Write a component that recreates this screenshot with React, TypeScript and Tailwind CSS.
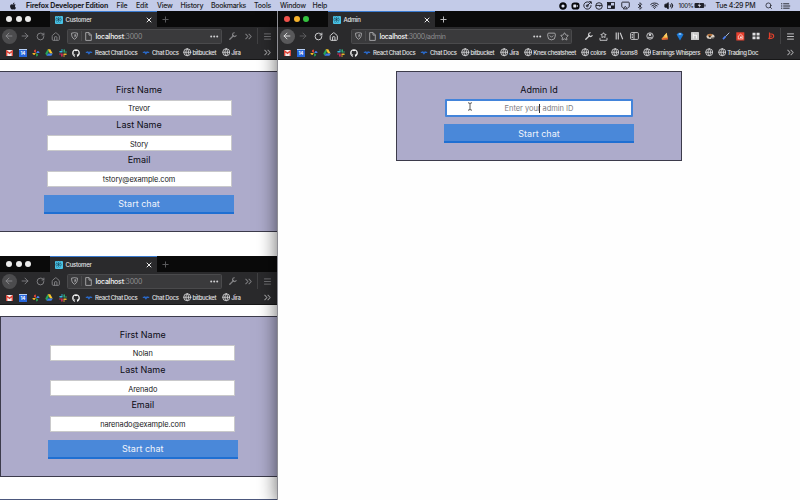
import React from "react";
import {
  ArrowLeft, ArrowRight, RotateCw, House, ChevronsRight, Menu, X, Plus,
  Globe, Star, Bluetooth, Wifi, Volume2, Search, Airplay, Pocket,
} from "lucide-react";
import { FaApple, FaGithub, FaReact } from "react-icons/fa";

const Cell = ({ c, children }: { c: string; children?: React.ReactNode }) => (
  <div className={"flex h-full shrink-0 items-center justify-center " + c}>{children}</div>
);

function MenuBar() {
  return (
    <div className="relative z-20 flex h-[11px] shrink-0 items-center bg-[#c3cbe8] text-[7px] font-medium leading-[10px] text-[#1c1d26]">
      <Cell c="w-[26px]"><FaApple size={8} /></Cell>
      <div className="w-[90.5px] font-bold tracking-[-0.14px]">Firefox Developer Edition</div>
      <div className="w-[19.5px] tracking-[-0.2px]">File</div>
      <div className="w-[21px] tracking-[-0.2px]">Edit</div>
      <div className="w-[23.5px] tracking-[-0.2px]">View</div>
      <div className="w-[30.5px] tracking-[-0.2px]">History</div>
      <div className="w-[43px] tracking-[-0.3px]">Bookmarks</div>
      <div className="w-[26px] tracking-[-0.2px]">Tools</div>
      <div className="w-[32.5px] tracking-[-0.25px]">Window</div>
      <div className="tracking-[-0.2px]">Help</div>
      <div className="flex-1" />
      <div className="flex h-full w-[244px] shrink-0 items-center">
        <Cell c="w-[13px]">
          <svg width="8" height="8" viewBox="0 0 8 8"><circle cx="4" cy="4" r="2.7" fill="#dfe4f3" stroke="#08090c" strokeWidth="2.2" /></svg>
        </Cell>
        <Cell c="w-[13px]">
          <svg width="9" height="8" viewBox="0 0 9 8"><rect x=".5" y=".4" width="8" height="7.2" rx="2.8" fill="#08090c" /><rect x="2.3" y="2.6" width="3" height="2.8" rx=".4" fill="#e8ebf6" /><path d="M5.6 4l1.4-1.1v2.2z" fill="#e8ebf6" /></svg>
        </Cell>
        <Cell c="w-[11px]">
          <svg width="9" height="9" viewBox="0 0 9 9" fill="none" stroke="#17181f" strokeWidth=".9"><path d="M6 1.3A3.6 3.6 0 1 0 8 4.2M6 .7h2.3v2.3M4.2 4.8L8 1" /><circle cx="4.3" cy="4.8" r="1" /></svg>
        </Cell>
        <Cell c="w-[11px]">
          <svg width="8" height="8" viewBox="0 0 8 8" fill="none" stroke="#17181f" strokeWidth=".9"><circle cx="4" cy="4" r="3.3" /><path d="M1 3.4h6M4 3.4l1 1.4" /></svg>
        </Cell>
        <Cell c="w-[14px]">
          <svg width="8" height="7" viewBox="0 0 8 7"><rect x=".5" y=".5" width="7" height="6" fill="none" stroke="#17181f" strokeWidth=".8" /><path d="M.5.5H4v3H.5zM4 3.5h3.5v3H4z" fill="#17181f" /></svg>
        </Cell>
        <Cell c="w-[15px]"><Airplay size={9} strokeWidth={2.4} /></Cell>
        <Cell c="w-[14px]"><Bluetooth size={8} strokeWidth={2.4} /></Cell>
        <Cell c="w-[14px]"><Wifi size={9} strokeWidth={2.6} /></Cell>
        <Cell c="w-[16px]"><Volume2 size={9.5} strokeWidth={2} fill="#17181f" /></Cell>
        <div className="w-[17px] pl-[1.5px] text-[6px] tracking-[-0.3px]">100%</div>
        <Cell c="w-[12px]">
          <svg width="12" height="7" viewBox="0 0 12 7"><rect x=".5" y="1" width="9.6" height="5" rx=".9" fill="#22232c" /><path d="M11 2.5v2" stroke="#22232c" /><path d="M5.8 1L3.8 3.8h1.5L4.8 6l2.2-3H5.4z" fill="#e7eaf7" /></svg>
        </Cell>
        <div className="w-[46.5px] pl-[9.5px]"><span className="whitespace-nowrap tracking-[-0.24px]">Tue 4:29 PM</span></div>
        <Cell c="w-[28px]"><Search size={7.5} strokeWidth={2.4} className="ml-[4px]" /></Cell>
        <Cell c="w-[10px]">
          <svg width="10" height="6" viewBox="0 0 10 6" stroke="#17181f" strokeWidth=".9"><path d="M0 .8h1.3M0 3h1.3M0 5.2h1.3M2.2.8h6M2.2 3h7M2.2 5.2h6.4" /></svg>
        </Cell>
      </div>
    </div>
  );
}

function TabBar({ title, active }: { title: string; active?: boolean }) {
  const dots = active ? ["bg-[#f0524b]", "bg-[#f6b32c]", "bg-[#35c33f]"] : ["bg-[#ececec]", "bg-[#ececec]", "bg-[#ececec]"];
  return (
    <div className="flex h-[16px] bg-[#0a0a0a]">
      <div className="flex w-[50px] items-center gap-[3.6px] pl-[6px]">
        {dots.map((d, i) => <div key={i} className={"size-[6px] rounded-full " + d} />)}
      </div>
      <div className="flex w-[107px] items-center border-t border-[#3a7bd0] bg-[#2a2a2c]">
        <div className="ml-[4.5px] flex size-[8px] items-center justify-center rounded-[1px] bg-[#49c3e6] text-[#18455a]"><FaReact size={7} /></div>
        <div className="ml-[3px] flex-1 text-[6px] font-medium leading-[8px] tracking-[-0.25px] text-[#e6e6e8]">{title}</div>
        <X size={8} strokeWidth={3} className="mr-[4px] text-[#ededed]" />
      </div>
      <Plus size={9} strokeWidth={2.6} className={active ? "ml-[3.5px] mt-[3.5px] text-[#bdbdbf]" : "ml-[3.5px] mt-[3.5px] text-[#5b5b5e]"} />
    </div>
  );
}

function ShieldIcon() {
  return <svg width="7" height="8" viewBox="0 0 7 8" fill="none" stroke="#aaaaad" strokeWidth=".9"><path d="M.6 1.1Q2.2 1 3.5.6 4.8 1 6.4 1.1C6.5 4 5.8 6 3.5 7.3 1.2 6 .5 4 .6 1.1z" /><path d="M3.5 2.2v3.4Q5 4.6 5 2.4z" fill="#aaaaad" stroke="none" /></svg>;
}

function NavBar({ path, active }: { path: string; active?: boolean }) {
  return (
    <div className={"flex h-[18.5px] items-center " + (active ? "text-[#d0d0d2]" : "text-[#808083]")}>
      <div className={"ml-[1.5px] flex size-[15px] shrink-0 items-center justify-center rounded-full " + (active ? "bg-[#59595b] text-[#e4e4e5]" : "bg-[#4c4c4e] text-[#8b8b8e]")}><ArrowLeft size={10} strokeWidth={2.2} /></div>
      <Cell c={active ? "w-[17px] text-[#606063]" : "w-[17px]"}><ArrowRight size={10} strokeWidth={2.2} /></Cell>
      <Cell c="w-[14px]"><RotateCw size={9} strokeWidth={2.6} /></Cell>
      <Cell c="w-[17px]"><House size={9.5} strokeWidth={2.5} /></Cell>
      <div className={"flex h-[14.5px] shrink-0 items-center rounded-[1.5px] border border-[#4a4a4c] bg-[#3a3a3c] text-[#b6b6b8] " + (active ? "ml-[8.5px] w-[220.5px]" : "ml-[2.5px] w-[155px]")}>
        <Cell c="w-[13px]"><ShieldIcon /></Cell>
        <div className="h-[10px] w-px bg-[#4b4b4d]" />
        <Cell c="w-[13px]">
          <svg width="7" height="9" viewBox="0 0 7 9" fill="none" stroke="#aaaaad" strokeWidth=".9"><path d="M.7.6h3.3L6.3 2.9v5.5H.7zM4 .6v2.5h2.3" /></svg>
        </Cell>
        <div className={"flex-1 whitespace-nowrap pt-px text-[7px] leading-[10px] text-[#8d8d90] " + (active ? "ml-[0.5px] tracking-[-0.33px]" : "ml-[0.5px] tracking-[-0.24px]")}><span className="font-medium text-[#f2f2f3]">localhost</span>{path}</div>
        <Cell c="w-[14px]"><svg width="9" height="3" viewBox="0 0 9 3" fill="#d0d0d2"><circle cx="1.2" cy="1.5" r="1" /><circle cx="4.2" cy="1.5" r="1" /><circle cx="7.2" cy="1.5" r="1" /></svg></Cell>
        {active && (
          <>
            <Cell c="w-[13px]"><Pocket size={9} strokeWidth={2.2} /></Cell>
            <Cell c="w-[13px]"><Star size={9} strokeWidth={2.2} /></Cell>
          </>
        )}
      </div>
      {active ? <Extensions /> : (
        <div className="flex h-full flex-1 items-center">
          <Cell c="ml-[3.5px] w-[15px]"><WrenchIcon /></Cell>
          <Cell c="w-[16px]"><ChevronsRight size={11} strokeWidth={2.2} /></Cell>
          <div className="ml-[0.5px] h-[16px] w-px bg-[#414143]" />
          <Cell c="w-[19px]"><Menu size={9} strokeWidth={2.2} /></Cell>
        </div>
      )}
    </div>
  );
}

function WrenchIcon() {
  return <svg width="8" height="8" viewBox="0 0 8 8" fill="none" stroke="currentColor"><path d="M.8 7.3L4.6 3.5" strokeWidth="1.3" strokeLinecap="round" /><path d="M5.7.8a1.9 1.9 0 1 0 1.6 2.2" strokeWidth="1.1" /></svg>;
}

function Extensions() {
  return (
    <div className="flex h-full flex-1 items-center">
      <Cell c="ml-[9.5px] w-[15px]"><WrenchIcon /></Cell>
      <Cell c="w-[15.5px]">
        <svg width="9" height="9" viewBox="0 0 9 9" fill="none" stroke="currentColor" strokeWidth=".9"><path d="M4.5.7l.9 1.5 1.7.3-1.2 1.3.2 1.7-1.6-.7-1.6.7.2-1.7-1.2-1.3 1.7-.3zM1 5.8v2.5h7V5.8" /></svg>
      </Cell>
      <Cell c="w-[15px]">
        <svg width="9" height="8" viewBox="0 0 9 8" fill="none" stroke="currentColor"><path d="M1.2.6v6.8M3.3.6v6.8M5.2.8l2.5 6.4" strokeWidth="1.1" /></svg>
      </Cell>
      <Cell c="w-[15.5px]">
        <svg width="9" height="8" viewBox="0 0 9 8" fill="none" stroke="currentColor" strokeWidth=".9"><rect x=".6" y=".6" width="7.8" height="6.8" rx="1" /><path d="M4 .6v6.8M1.7 2.5H3M1.7 4H3M1.7 5.5H3" /></svg>
      </Cell>
      <Cell c="w-[15px]">
        <svg width="8" height="8" viewBox="0 0 8 8" fill="none" stroke="currentColor" strokeWidth=".9"><circle cx="4" cy="4" r="3.2" /><circle cx="4" cy="2.8" r="1.3" fill="currentColor" stroke="none" /><path d="M2 5.1Q4 6.6 6 5.1" /></svg>
      </Cell>
      <Cell c="w-[15.5px]">
        <svg width="8" height="9" viewBox="0 0 8 9"><path d="M5.7.7L7 7.3 1 7.8l-.5-1z" fill="#f3a93c" /><path d="M5.7.7L2.8 4.2l3.5 1z" fill="#f7cf68" /><path d="M1 6.5l5.8-.4.2 1.2-6 .5z" fill="#d94f32" /></svg>
      </Cell>
      <Cell c="w-[15px]">
        <svg width="8" height="9" viewBox="0 0 8 9"><path d="M.6 2.6L2.5.7h3l2 1.9L4 8.5z" fill="#1d79d6" /><path d="M2.3 2.6h3.4L4 .9z" fill="#d7edfc" /></svg>
      </Cell>
      <Cell c="w-[15px]">
        <svg width="8" height="8" viewBox="0 0 8 8"><rect width="8" height="8" rx=".6" fill="#c7c7c7" /><path d="M2.3 1.5v5M2.3 3.3H5.3M5.5 3v3.5" stroke="#f3f3f3" strokeWidth="1" /></svg>
      </Cell>
      <Cell c="w-[15.5px]">
        <svg width="9" height="8" viewBox="0 0 9 8"><ellipse cx="4.5" cy="4.5" rx="4" ry="2.5" fill="#d8cfc4" /><path d="M1.2 3Q3.5.8 6.5 2.3L5.6 4 2 4.5z" fill="#b9743c" /><circle cx="3.8" cy="4.6" r="1" fill="#28221d" /><path d="M5 6.3l3-.4" stroke="#333" /></svg>
      </Cell>
      <Cell c="w-[15px]">
        <svg width="8" height="8" viewBox="0 0 8 8"><path d="M7.3.7L3.3 4.8" stroke="#a9b7d0" strokeWidth="1" /><path d="M3.6 4.4L1 7.1" stroke="#4b7ff0" strokeWidth="1.7" /></svg>
      </Cell>
      <Cell c="w-[15px]">
        <svg width="9" height="9" viewBox="0 0 9 9"><rect x=".3" y=".3" width="8" height="8.2" fill="#e8412f" /><path d="M2.3 4l2.2-1.8L6.8 4v2.9H2.3z" fill="none" stroke="#ffd5ce" strokeWidth=".8" /><rect x="4.2" y="4.5" width="1.5" height="1.5" fill="#fff" /></svg>
      </Cell>
      <Cell c="w-[15.5px]">
        <svg width="8" height="8" viewBox="0 0 8 8" fill="#dedee0"><path d="M.5.8h3v2.7h-3zM4.6.8h3v2.7h-3zM.5 4.6h3v2.7h-3zM4.6 4.6h3v2.7h-3z" /></svg>
      </Cell>
      <Cell c="w-[15px]">
        <svg width="7" height="8" viewBox="0 0 7 8" fill="none" stroke="#e0402b"><path d="M1.5.5v6.8M1.5 2H3.5a2 2 0 0 1 0 4.3H.3M3 3.4v1.6" strokeWidth="1.2" /></svg>
      </Cell>
      <div className="ml-[1px] h-[16px] w-px bg-[#414143]" />
      <Cell c="w-[19px]"><Menu size={9} strokeWidth={2.4} /></Cell>
    </div>
  );
}

const Site = ({ c, label, docs }: { c: string; label?: string; docs?: boolean }) => (
  <div className={"flex shrink-0 items-center whitespace-nowrap " + c}>
    {docs ? (
      <svg className="mr-[2px]" width="8" height="5" viewBox="0 0 8 5"><path d="M.8 2.4h6.4M2.3 1.5l1.6 2.2 1.7-2.2" fill="none" stroke="#2a67c4" strokeWidth="1.3" /></svg>
    ) : (
      <Globe size={8.5} strokeWidth={2.5} className="mr-px shrink-0 text-[#d2d2d4]" />
    )}
    {label}
  </div>
);

function Bookmarks({ active }: { active?: boolean }) {
  return (
    <div className="flex h-[14px] items-center pl-[2.8px] text-[6px] font-medium leading-[9px] tracking-[-0.36px] text-[#e2e2e4]">
      <Cell c="w-[13.3px]">
        <svg width="7" height="6" viewBox="0 0 7 6"><rect width="7" height="6" rx=".6" fill="#f2eeee" /><path d="M.7 6V1l2.8 2.3L6.3 1v5" fill="none" stroke="#dc4437" strokeWidth="1.3" /></svg>
      </Cell>
      <Cell c="w-[13.3px]">
        <div className="flex size-[8px] items-end justify-center border-t-[1.5px] border-[#b7cff6] bg-[#2766da] text-[4.5px] font-bold leading-[6px] text-white">14</div>
      </Cell>
      <Cell c="w-[13.3px]">
        <svg width="8" height="8" viewBox="0 0 8 8"><path d="M3.9 4V.5Q1.8.6 1.8 2.5L3.9 4z" fill="#e64638" /><path d="M4.1 3.9h3.5Q7.5 1.9 5.5 1.9z" fill="#4c82ee" /><path d="M4.1 4v3.5Q6 7.4 6.1 5.5z" fill="#2aa657" /><path d="M3.9 4.1H.4Q.5 6 2.5 6.1z" fill="#f7b723" /></svg>
      </Cell>
      <Cell c="w-[13.3px]">
        <svg width="8" height="7" viewBox="0 0 8 7"><path d="M2.7.3L.3 4.5l1.3 2.2L4 2.5z" fill="#26a35a" /><path d="M2.7.3h2.6l2.4 4.2H5.1z" fill="#fac72d" /><path d="M1.6 6.7l1.3-2.2h4.8L6.4 6.7z" fill="#3f7ee8" /></svg>
      </Cell>
      <Cell c="w-[13.3px]">
        <svg width="8" height="8" viewBox="0 0 8 8" fill="none" strokeWidth="1.5" strokeLinecap="round"><path d="M1 2.7h2M3 1v.1" stroke="#36b9df" /><path d="M5.2 1v2M7 3v.1" stroke="#2fae75" /><path d="M5 5.2h2M5 7v-.1" stroke="#e9b02c" /><path d="M2.9 5v2M1 5v.1" stroke="#df2a61" /></svg>
      </Cell>
      <Cell c="w-[13.3px]"><FaGithub size={8} className="text-[#f3f3f3]" /></Cell>
      <Site c="ml-[2.5px] w-[57px]" docs label="React Chat Docs" />
      <Site c="w-[41px]" docs label="Chat Docs" />
      <Site c="w-[38.7px]" label="bitbucket" />
      {active ? (
        <>
          <Site c="w-[24px]" label="Jira" />
          <Site c="w-[57px]" label="Knex cheatsheet" />
          <Site c="w-[30px]" label="colors" />
          <Site c="w-[32px]" label="icons8" />
          <Site c="w-[62px]" label="Earnings Whispers" />
          <Site c="w-[13px]" />
          <Site c="" label="Trading Doc" />
        </>
      ) : <Site c="" label="Jira" />}
      <ChevronsRight size={11} strokeWidth={2.2} className="ml-auto mr-[4.5px] text-[#a5a5a7]" />
    </div>
  );
}

function Chrome({ title, path, active }: { title: string; path: string; active?: boolean }) {
  return (
    <div className="h-[49px] shrink-0 border-b border-[#171718] bg-[#2a2a2c]">
      <TabBar title={title} active={active} />
      <NavBar path={path} active={active} />
      <Bookmarks active={active} />
    </div>
  );
}

const Label = ({ children }: { children: string }) => (
  <div className="flex h-[15px] shrink-0 items-center justify-center text-[9px] leading-[14px] text-[#0c0c14]">{children}</div>
);

const Button = () => (
  <div className="flex h-[19px] w-[190px] items-center justify-center border-b-2 border-[#1f6fd2] bg-[#4a88d9] pt-[1.5px] text-[9px] text-[#f1f5fc]">Start chat</div>
);

function CustomerForm({ values, c }: { values: string[]; c: string }) {
  const labels = ["First Name", "Last Name", "Email"];
  return (
    <div className={"flex h-[161px] shrink-0 flex-col items-center border-y border-[#3c3b4b] bg-[#adabcb] pt-[10px] " + c}>
      {labels.map((l, i) => (
        <React.Fragment key={l}>
          <Label>{l}</Label>
          <div className="mb-[1.3px] mt-[3px] flex h-[16px] w-[185px] shrink-0 items-center justify-center border border-[#c9c9cb] bg-white pt-[2.5px] text-[7.4px] leading-[10px] tracking-[-0.08px] text-[#17171a]">{values[i]}</div>
        </React.Fragment>
      ))}
      <div className="mt-[7px]"><Button /></div>
    </div>
  );
}

export default function App() {
  return (
    <div className="flex h-[500px] w-[800px] flex-col overflow-hidden bg-white font-[Inter,'Liberation_Sans',sans-serif]">
      <MenuBar />
      <div className="flex flex-1">
        <div className="flex w-[277px] shrink-0 flex-col bg-white">
          <Chrome title="Customer" path=":3000" />
          <CustomerForm values={["Trevor", "Story", "tstory@example.com"]} c="mt-[11px] pl-px" />
          <div className="mt-[24px] flex h-[244px] flex-col border-b border-[#4c587d] bg-white">
            <Chrome title="Customer" path=":3000" />
            <CustomerForm values={["Nolan", "Arenado", "narenado@example.com"]} c="mt-[11px] border-l pl-[7.5px]" />
          </div>
        </div>
        <div className="relative flex flex-1 flex-col border-l border-[#8e8e94] bg-[#fefefe] shadow-[0_4px_18px_rgba(0,0,0,0.6)]">
          <Chrome title="Admin" path=":3000/admin" active />
          <div className="ml-[118px] mt-[11px] flex h-[90px] w-[286px] flex-col items-center border border-[#3c3b4b] bg-[#adabcb] pt-[10px]">
            <Label>Admin Id</Label>
            <div className="relative mt-[2px] flex h-[18px] w-[188px] shrink-0 items-center justify-center rounded-[1px] border-2 border-[#4384da] bg-white pt-[2px] text-[7.5px] leading-[10px] text-[#7b7b7f]">
              <span className="whitespace-pre tracking-[-0.05px]">Enter your admin ID</span>
              <span className="absolute left-[92px] top-[3px] h-[9px] w-px bg-[#333]" />
              <svg className="absolute left-[20px] top-[1px]" width="6" height="9" viewBox="0 0 6 9" fill="none" stroke="#444" strokeWidth=".9"><path d="M1 .8Q3 .8 3 1.8Q3 .8 5 .8M3 1.5v6M1 8.2Q3 8.2 3 7.2Q3 8.2 5 8.2" /></svg>
            </div>
            <div className="mt-[7px]"><Button /></div>
          </div>
        </div>
      </div>
    </div>
  );
}
